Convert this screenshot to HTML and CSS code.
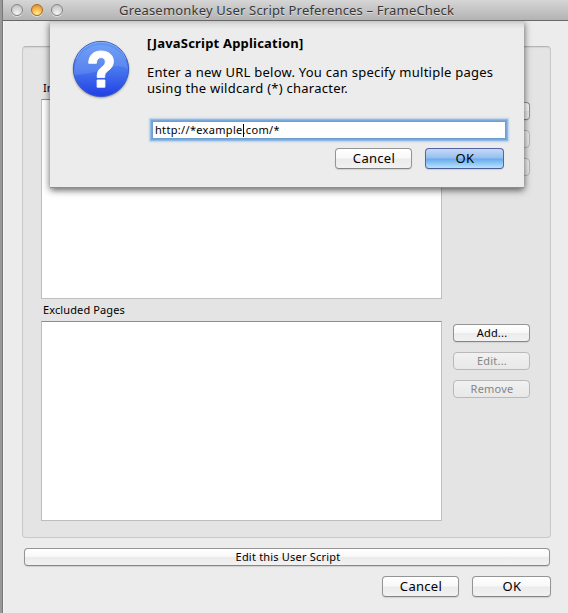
FILE: index.html
```html
<!DOCTYPE html>
<html lang="en">
<head>
<meta charset="utf-8">
<title>Greasemonkey User Script Preferences – FrameCheck</title>
<link rel="stylesheet" href="styles.css">
</head>
<body>
<div class="window">
  <header class="titlebar">
    <div class="lights"><i class="light"></i><i class="light amber"></i><i class="light"></i></div>
    <h1 class="title">Greasemonkey User Script Preferences – FrameCheck</h1>
  </header>
  <main class="content">
    <section class="group">
      <div class="pages">
        <div class="label"><span>Included Pages</span></div>
        <div class="row">
          <div class="list"></div>
          <div class="actions">
            <button class="btn small">Add...</button>
            <button class="btn small" disabled>Edit...</button>
            <button class="btn small" disabled>Remove</button>
          </div>
        </div>
      </div>
      <div class="pages">
        <div class="label"><span>Excluded Pages</span></div>
        <div class="row">
          <div class="list"></div>
          <div class="actions">
            <button class="btn small">Add...</button>
            <button class="btn small" disabled>Edit...</button>
            <button class="btn small" disabled>Remove</button>
          </div>
        </div>
      </div>
    </section>
    <button class="btn small wide">Edit this User Script</button>
    <div class="footer">
      <button class="btn">Cancel</button>
      <button class="btn ok">OK</button>
    </div>
  </main>
  <div class="clip">
    <div class="sheet">
      <svg class="icon" width="60" height="62" viewBox="0 0 60 62">
        <defs>
          <linearGradient id="blue" x1="0" y1="0" x2="0" y2="1">
            <stop offset="0" stop-color="#6398f4"/><stop offset=".5" stop-color="#4777ee"/><stop offset="1" stop-color="#203fe5"/>
          </linearGradient>
          <filter id="soft" x="-20%" y="-20%" width="140%" height="140%"><feGaussianBlur stdDeviation="1"/></filter>
        </defs>
        <circle cx="30" cy="31" r="28" fill="#555" opacity=".55" filter="url(#soft)"/>
        <circle cx="30" cy="30" r="27.6" fill="url(#blue)" stroke="#3a5bc0" stroke-width="1"/>
        <path d="M3.2 36A27 27 0 0 1 57 30Q48 24 34 30Q20 35 3.2 36Z" fill="#fff" opacity=".11"/>
        <path d="M5 20A27 27 0 0 1 55 20" fill="none" stroke="#9cc0ff" stroke-width="1" opacity=".6"/>
        <path transform="translate(-.3 .8)" d="M18 23.500C18 15.500 23 11.200 30.300 11.200C37.800 11.200 42.700 15.300 42.700 21.500C42.700 26 40.500 28.400 37 31.200C34.500 33.200 34 34.200 34 37.600H26.500C26.400 32.800 27.300 30.500 30.500 27.900C33.500 25.500 34.600 24.300 34.600 21.900C34.600 19.300 33 17.800 30.400 17.800C27.400 17.800 25.800 19.800 25.700 23.500ZM26.400 40.200H34.200V47.400H26.400Z" fill="#fff" stroke="#fff" stroke-width=".9"/>
      </svg>
      <div class="dialog">
        <h2 class="heading">[JavaScript Application]</h2>
        <p class="message">Enter a new URL below. You can specify multiple pages<br>using the wildcard (*) character.</p>
        <div class="field"><span>http://*example</span><i class="caret"></i><span>.com/*</span></div>
        <div class="choices">
          <button class="btn">Cancel</button>
          <button class="btn ok primary">OK</button>
        </div>
      </div>
    </div>
  </div>
</div>
</body>
</html>
```
FILE: styles.css
```css
* { box-sizing: border-box; }
body {
  margin: 0;
  width: 568px;
  height: 613px;
  overflow: hidden;
  font: 13px/16px "Noto Sans", sans-serif;
  color: #000;
}
.window {
  position: relative;
  height: 613px;
  background: #ececec;
  border-left: 3px solid #999;
  box-shadow: inset 1px 0 #f4f4f4;
}
.window::before {
  content: "";
  position: absolute;
  left: -1px;
  top: 0;
  width: 1px;
  height: 613px;
  background: #777;
}
.titlebar {
  display: flex;
  height: 21px;
  background: linear-gradient(#d6d6d6, #b3b3b3);
  border-bottom: 1px solid #686868;
}
.lights { display: flex; gap: 8px; padding: 4px 0 0 8px; width: 116px; }
.light {
  width: 12px;
  height: 12px;
  border-radius: 50%;
  border: 1px solid #858585;
  background: radial-gradient(circle at 50% 85%, #f4f4f4, #d4d4d4 55%, #b8b8b8);
  box-shadow: 0 1px #e0e0e0;
}
.amber {
  border-color: #a96a20;
  background: radial-gradient(circle at 50% 90%, #fff39a, #f4b44b 55%, #d98624);
}
.title {
  margin: 0;
  padding-top: 2px;
  font-size: 13px;
  font-weight: 400;
  line-height: 16px;
  letter-spacing: .19px;
  color: #383838;
  text-shadow: 0 1px #dcdcdc;
  white-space: nowrap;
}
.content { padding: 25px 17px 0 19px; }
.group {
  height: 492px;
  padding: 33px 20px 0 18px;
  background: #e4e4e4;
  border: 1px solid #c9c9c9;
  border-top-color: #b5b5b5;
  border-radius: 4px;
  box-shadow: inset 0 1px 1px #d4d4d4;
}
.pages { height: 222px; }
.label { height: 19px; padding: 1px 0 0 2px; font-size: 11px; line-height: 14px; letter-spacing: .12px; }
.row { display: flex; gap: 11px; }
.list {
  width: 401px;
  height: 200px;
  background: #fff;
  border: 1px solid #bebebe;
  border-top-color: #8e8e8e;
}
.actions { display: flex; flex-direction: column; gap: 10px; padding-top: 3px; }
.btn {
  display: block;
  width: 77px;
  height: 21px;
  padding: 0 0 1px 1px;
  border: 1px solid #949494;
  border-bottom-color: #858585;
  border-radius: 4px;
  background: linear-gradient(#fff, #f8f8f8 48%, #ebebeb 52%, #f2f2f2);
  box-shadow: 0 1px 1px #d2d2d2;
  font: 13px/18px "Noto Sans", sans-serif;
  letter-spacing: .3px;
  color: #000;
  text-align: center;
}
.small { height: 18px; padding-bottom: 1px; font-size: 11px; line-height: 15px; letter-spacing: .2px; }
.small { padding-top: 0; }
.btn:disabled { color: #858585; border-color: #b9b9b9; background: linear-gradient(#f1f1f1, #e8e8e8); box-shadow: none; }
.wide { width: 526px; margin: 10px 0 0 2px; padding-left: 2px; }
.ok { width: 79px; }
.footer { display: flex; justify-content: flex-end; gap: 13px; padding-top: 10px; }
.clip {
  position: absolute;
  left: 27px;
  top: 21px;
  width: 514px;
  height: 190px;
  padding: 0 20px;
  overflow: hidden;
}
.sheet {
  display: flex;
  width: 474px;
  height: 167px;
  padding: 17px 20px 0 21px;
  background: linear-gradient(#c6c6c6, #dcdcdc 3px, #ececec 8px);
  border-bottom: 1px solid #8d8d8d;
  box-shadow: 0 2px 7px rgba(0,0,0,.65);
}
.icon { flex: none; margin-top: 1px; }
.dialog { width: 373px; padding-left: 16px; }
.heading { margin: -3px 0 0; font-size: 13px; line-height: 16px; letter-spacing: .2px; white-space: nowrap; }
.message { margin: 13px 0 0; letter-spacing: .25px; white-space: nowrap; }
.field {
  display: flex;
  align-items: center;
  width: 354px;
  height: 18px;
  margin: 25px 0 0 5px;
  padding-left: 2px;
  background: #fff;
  border: 1px solid #6f9fce;
  box-shadow: 0 0 0 1px #78a8d8, 0 0 1px 2px #91b9e2, 0 0 2px 3px #c2d7ed;
  font-size: 11px;
  line-height: 14px;
  letter-spacing: .32px;
}
.caret { width: 1px; height: 13px; margin-right: -1px; background: #000; }
.choices { display: flex; justify-content: flex-end; gap: 13px; margin-top: 9px; }
.primary {
  border-color: #5663a8;
  border-bottom-color: #4d5c94;
  background: linear-gradient(#c5daf5, #94bff0 48%, #68aaee 52%, #b6e4fd);
}
```
